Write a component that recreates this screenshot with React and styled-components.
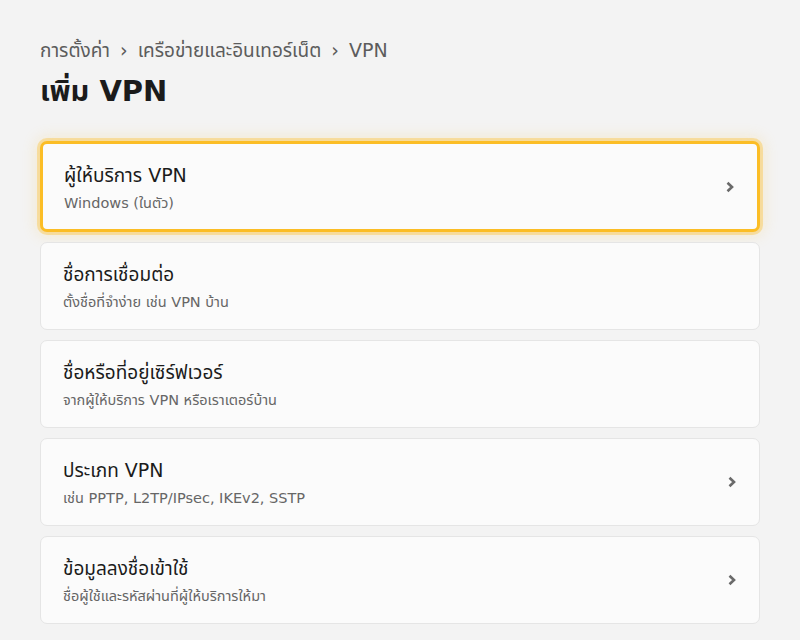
import styled, { createGlobalStyle } from "styled-components";

const GlobalStyle = createGlobalStyle`
  html, body {
    margin: 0;
    padding: 0;
    background: #f3f3f3;
    font-family: "DejaVu Sans", "Noto Sans Thai", "Noto Sans", sans-serif;
  }
`;

const Page = styled.div`
  padding: 35px 40px 16px;
  min-height: 640px;
  box-sizing: border-box;
`;

const Breadcrumb = styled.div`
  display: flex;
  align-items: center;
  gap: 10px;
  font-size: 19px;
  line-height: 30px;
  color: #5c5c5c;
`;

const Title = styled.h1`
  margin: 6px 0 30px;
  font-size: 29px;
  line-height: 40px;
  font-weight: 700;
  color: #1b1b1b;
`;

const List = styled.div`
  display: flex;
  flex-direction: column;
  gap: 10px;
`;

const Card = styled.div`
  display: flex;
  align-items: center;
  justify-content: space-between;
  height: ${(p) => (p.$active ? "91px" : "88px")};
  box-sizing: border-box;
  padding: 0 22px 0 ${(p) => (p.$active ? "21px" : "22px")};
  background: #fbfbfb;
  border: ${(p) => (p.$active ? "3px solid #fbbd25" : "1px solid #e5e5e5")};
  border-radius: 7px;
  box-shadow: ${(p) =>
    p.$active
      ? "0 0 0 3px rgba(251, 189, 37, 0.35), 0 0 14px 4px rgba(251, 200, 80, 0.22)"
      : "none"};
`;

const Text = styled.div`
  display: flex;
  flex-direction: column;
  gap: 5px;
  padding-top: 1px;
`;

const Label = styled.div`
  font-size: 19px;
  line-height: 26px;
  color: #1b1b1b;
`;

const Hint = styled.div`
  font-size: 14.5px;
  line-height: 20px;
  color: #666666;
`;

const Chevron = () => (
  <svg width="10" height="12" viewBox="0 0 10 12">
    <path
      d="M2.5 1.8 L7 6 L2.5 10.2"
      fill="none"
      stroke="#6a6a6a"
      strokeWidth="2.6"
    />
  </svg>
);

const items = [
  { label: "ผู้ให้บริการ VPN", hint: "Windows (ในตัว)", chevron: true, active: true },
  { label: "ชื่อการเชื่อมต่อ", hint: "ตั้งชื่อที่จำง่าย เช่น VPN บ้าน" },
  { label: "ชื่อหรือที่อยู่เซิร์ฟเวอร์", hint: "จากผู้ให้บริการ VPN หรือเราเตอร์บ้าน" },
  { label: "ประเภท VPN", hint: "เช่น PPTP, L2TP/IPsec, IKEv2, SSTP", chevron: true },
  { label: "ข้อมูลลงชื่อเข้าใช้", hint: "ชื่อผู้ใช้และรหัสผ่านที่ผู้ให้บริการให้มา", chevron: true },
];

export default function App() {
  return (
    <>
      <GlobalStyle />
      <Page>
        <Breadcrumb>
          <span>การตั้งค่า</span>
          <span>›</span>
          <span>เครือข่ายและอินเทอร์เน็ต</span>
          <span>›</span>
          <span>VPN</span>
        </Breadcrumb>
        <Title>เพิ่ม VPN</Title>
        <List>
          {items.map((it) => (
            <Card key={it.label} $active={it.active}>
              <Text>
                <Label>{it.label}</Label>
                <Hint>{it.hint}</Hint>
              </Text>
              {it.chevron && <Chevron />}
            </Card>
          ))}
        </List>
      </Page>
    </>
  );
}
